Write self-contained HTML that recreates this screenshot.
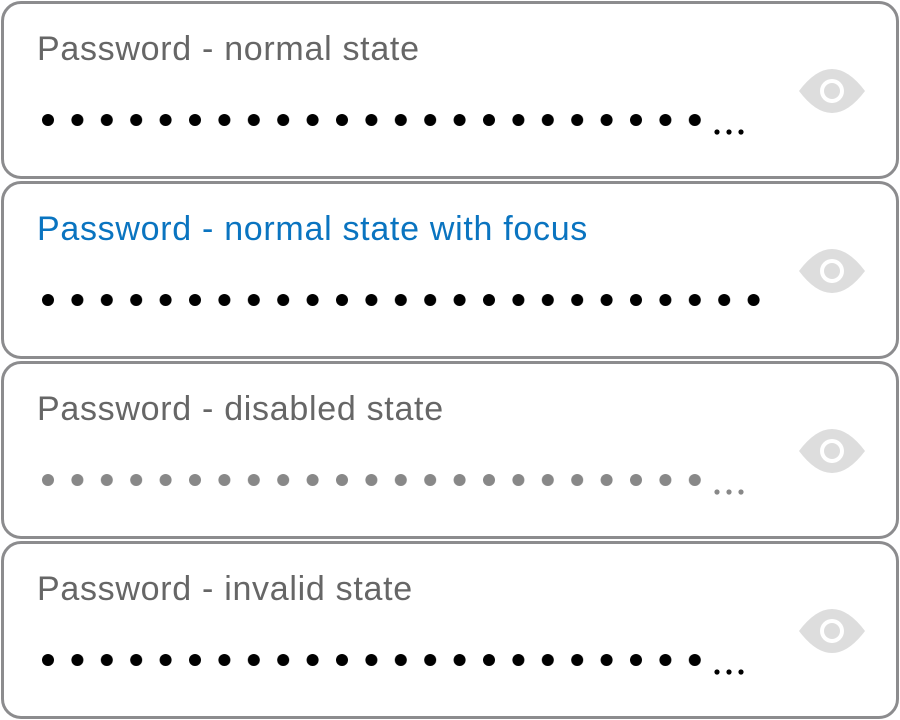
<!DOCTYPE html>
<html><head><style>
html,body{margin:0;padding:0;background:#fff;width:900px;height:720px;overflow:hidden}
.box{position:absolute;left:1px;width:892px;height:172px;border:3px solid #8c8c8e;border-radius:20px;background:#fff}
.lbl{position:absolute;left:33px;top:26px;font:34px/39px "Liberation Sans",sans-serif;color:#666;letter-spacing:0.7px;white-space:nowrap}
svg{position:absolute;left:0;top:0}
</style></head><body>
<svg width="0" height="0" style="position:absolute"><defs>
<pattern id="pb" x="41" y="109" width="29.4" height="20" patternUnits="userSpaceOnUse"><circle cx="6" cy="10" r="6" fill="#000"/></pattern>
<pattern id="pg" x="41" y="109" width="29.4" height="20" patternUnits="userSpaceOnUse"><circle cx="6" cy="10" r="6" fill="#888"/></pattern>
</defs></svg>

<div class="box" style="top:1px"><div class="lbl">Password - normal state</div>
<svg width="892" height="172" style="left:-3px;top:-3px">
<rect x="41" y="109" width="664" height="20" fill="url(#pb)"/>
<circle cx="716" cy="131" r="2.6" fill="#000"/><circle cx="728" cy="131" r="2.6" fill="#000"/><circle cx="740" cy="131" r="2.6" fill="#000"/>
<g transform="translate(831,90)"><path d="M-33 0 Q0 -44 33 0 Q0 44 -33 0Z" fill="#ddd"/><circle r="12" fill="#fff"/><circle r="8" fill="#ddd"/></g>
</svg></div>

<div class="box" style="top:181px"><div class="lbl" style="color:#0a74c0">Password - normal state with focus</div>
<svg width="892" height="172" style="left:-3px;top:-3px">
<rect x="41" y="109" width="725" height="20" fill="url(#pb)"/>
<g transform="translate(831,90)"><path d="M-33 0 Q0 -44 33 0 Q0 44 -33 0Z" fill="#ddd"/><circle r="12" fill="#fff"/><circle r="8" fill="#ddd"/></g>
</svg></div>

<div class="box" style="top:361px"><div class="lbl">Password - disabled state</div>
<svg width="892" height="172" style="left:-3px;top:-3px">
<rect x="41" y="109" width="664" height="20" fill="url(#pg)"/>
<circle cx="716" cy="131" r="2.6" fill="#888"/><circle cx="728" cy="131" r="2.6" fill="#888"/><circle cx="740" cy="131" r="2.6" fill="#888"/>
<g transform="translate(831,90)"><path d="M-33 0 Q0 -44 33 0 Q0 44 -33 0Z" fill="#ddd"/><circle r="12" fill="#fff"/><circle r="8" fill="#ddd"/></g>
</svg></div>

<div class="box" style="top:541px"><div class="lbl">Password - invalid state</div>
<svg width="892" height="172" style="left:-3px;top:-3px">
<rect x="41" y="109" width="664" height="20" fill="url(#pb)"/>
<circle cx="716" cy="131" r="2.6" fill="#000"/><circle cx="728" cy="131" r="2.6" fill="#000"/><circle cx="740" cy="131" r="2.6" fill="#000"/>
<g transform="translate(831,90)"><path d="M-33 0 Q0 -44 33 0 Q0 44 -33 0Z" fill="#ddd"/><circle r="12" fill="#fff"/><circle r="8" fill="#ddd"/></g>
</svg></div>
</body></html>
